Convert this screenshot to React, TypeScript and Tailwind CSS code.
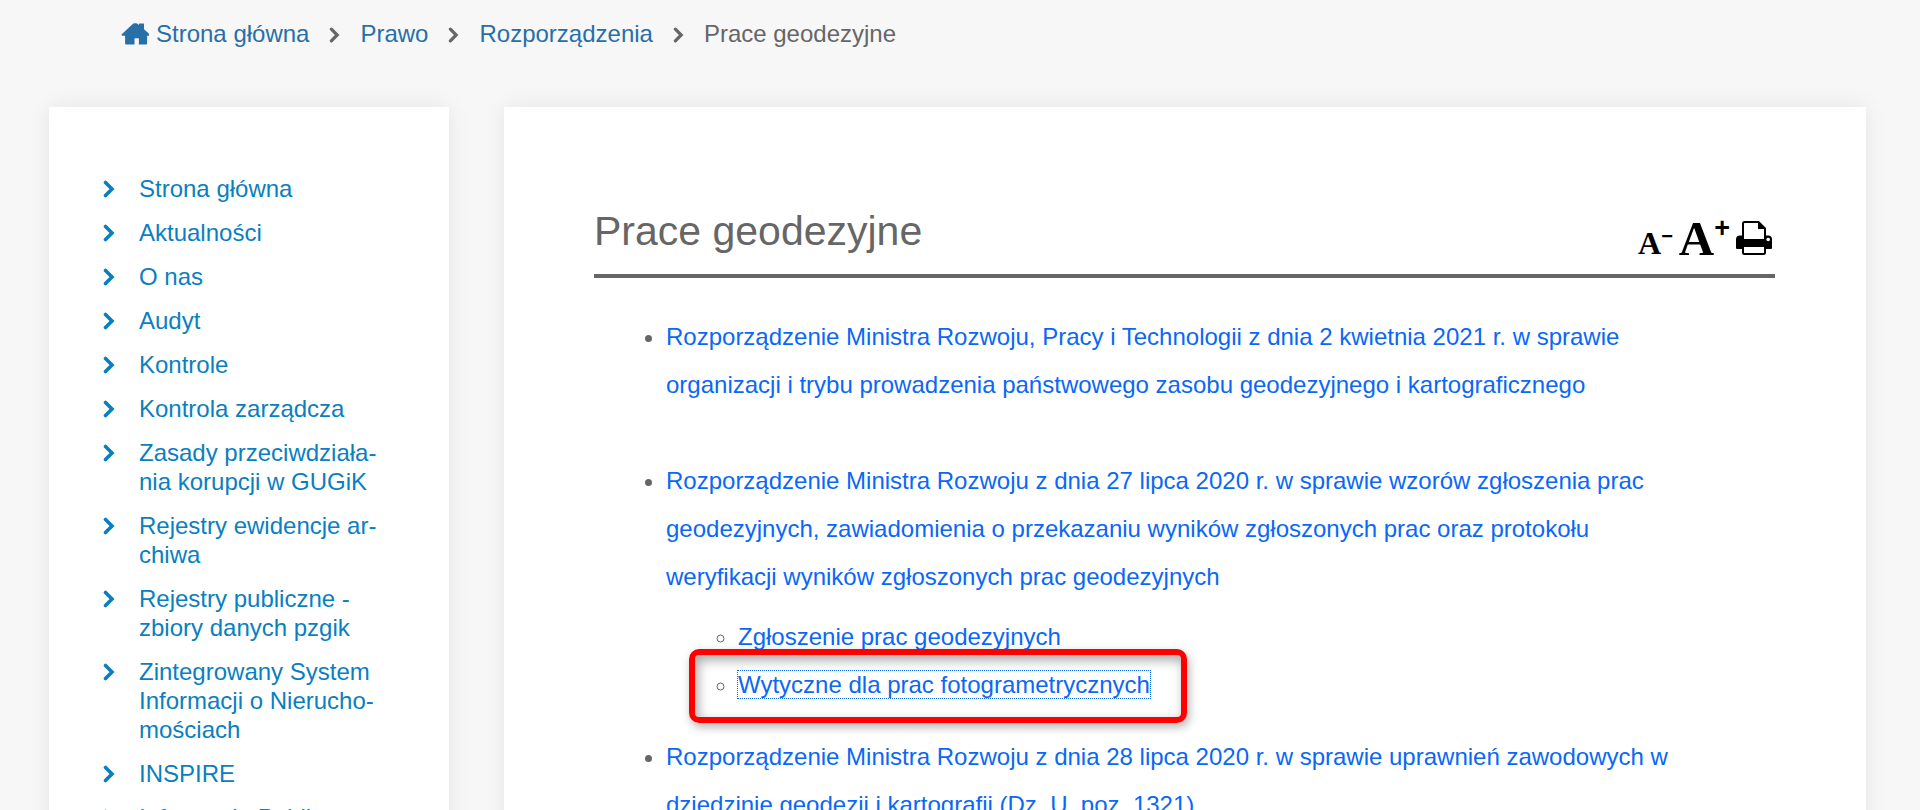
const breadcrumbs = ["Strona główna", "Prawo", "Rozporządzenia"];

const menu = [
  "Strona główna",
  "Aktualności",
  "O nas",
  "Audyt",
  "Kontrole",
  "Kontrola zarządcza",
  "Zasady przeciwdziała\u00adnia korupcji w GUGiK",
  "Rejestry ewidencje ar\u00adchiwa",
  "Rejestry publiczne - zbiory danych pzgik",
  "Zintegrowany System Informacji o Nierucho\u00admościach",
  "INSPIRE",
  "Informacja Publiczna",
];

function HomeIcon() {
  return (
    <svg viewBox="0 0 27 22" className="h-[22px] w-7" fill="currentColor" aria-hidden="true">
      <path d="M11.300.900Q12 .2 13 .2h1.600q.8 0 1.400.500l1.400 1.300V.9q0-.5.6-.5h3.900q.6 0 .6.600v5.300l5.300 4.700q.7.8.1 1.400-.4.400-1.300.400h-1v7.700q0 1-1 1h-7.200v-5.700q0-.6-.6-.6h-3.200q-.6 0-.6.600v5.700H4.600q-1 0-1-1v-7.700H1.500q-.9 0-1.200-.4-.5-.6.200-1.400z" />
    </svg>
  );
}

function Chevron({ className }: { className: string }) {
  return (
    <svg viewBox="0 0 12 18" className={className} fill="none" stroke="currentColor" aria-hidden="true">
      <path d="M2.500 2.500l6.500 6.500-6.500 6.500" strokeWidth="3.600" strokeLinecap="round" strokeLinejoin="miter" />
    </svg>
  );
}

function PrintIcon() {
  return (
    <svg viewBox="0 0 36 34" className="h-[34px] w-9" aria-hidden="true">
      <path d="M4 14.500h28a4 4 0 0 1 4 4V27q0 1-1 1H1q-1 0-1-1v-8.500a4 4 0 0 1 4-4z" fill="black" />
      <path d="M7 18V2.500Q7 1 8.500 1H22l7 7v10z" fill="white" />
      <path d="M7 18V2.500Q7 1 8.500 1H22.500L29 7.500V18" fill="none" stroke="black" strokeWidth="2" />
      <path d="M22 1v7h7.500z" fill="black" />
      <path d="M7 25h22v6.500q0 1.500-1.500 1.500h-19Q7 33 7 31.500z" fill="white" stroke="black" strokeWidth="2" />
      <circle cx="32.200" cy="18.500" r="1.800" fill="white" />
    </svg>
  );
}

export default function App() {
  return (
    <div className="h-screen overflow-hidden bg-[#f7f7f7] font-['Liberation_Sans',Arial,sans-serif] text-2xl text-[#666]">
      <nav aria-label="Okruszki" className="px-[121px] pt-5">
        <ol className="flex items-center">
          {breadcrumbs.map((name, i) => (
            <li key={name} className="flex items-center leading-7">
              <a href="#" className="flex items-center gap-[7px] text-[#286fa8]">
                {i === 0 && <HomeIcon />}
                {name}
              </a>
              <Chevron className="mx-5 mt-[2px] h-4 w-[11px]" />
            </li>
          ))}
          <li className="leading-7">Prace geodezyjne</li>
        </ol>
      </nav>

      <div className="mt-[59px] flex gap-[55px] pr-[54px] pl-[49px]">
        <aside className="w-[400px] shrink-0 bg-white pt-[67px] pr-[70px] pb-16 pl-[54px] shadow-[0_0_20px_rgba(0,0,0,0.08)]">
          <ul className="flex flex-col gap-[15px] leading-[29px] text-[#0a7fc0]">
            {menu.map((name) => (
              <li key={name}>
                <a href="#" className="flex items-start gap-6">
                  <Chevron className="mt-[6px] h-[18px] w-3 shrink-0" />
                  <span>{name}</span>
                </a>
              </li>
            ))}
          </ul>
        </aside>

        <main className="min-w-0 flex-1 bg-white pt-[100px] pr-[91px] pb-16 pl-[90px] shadow-[0_0_20px_rgba(0,0,0,0.08)]">
          <header className="flex items-end justify-between border-b-4 border-[#666] pb-[19px]">
            <h1 className="text-[41px] leading-[48px]">Prace geodezyjne</h1>
            <div className="flex items-end gap-[6px] pr-[3px] font-bold text-black">
              <button type="button" aria-label="Zmniejsz czcionkę" className="flex items-start">
                <span className="font-['Liberation_Serif',serif] text-[32px] leading-[24px]">A</span>
                <span className="text-[20px] leading-[10px]">−</span>
              </button>
              <button type="button" aria-label="Powiększ czcionkę" className="flex items-start">
                <span className="font-['Liberation_Serif',serif] text-[49px] leading-[32px]">A</span>
                <span className="text-[27px] leading-[10px]">+</span>
              </button>
              <button type="button" aria-label="Drukuj">
                <PrintIcon />
              </button>
            </div>
          </header>

          <ul className="mt-[35px] list-disc pr-20 pl-[72px] leading-[48px]">
            <li className="mb-12">
              <a href="#" className="text-[#0a68f5]">
                Rozporządzenie Ministra Rozwoju, Pracy i Technologii z dnia 2 kwietnia 2021 r. w sprawie
                organizacji i trybu prowadzenia państwowego zasobu geodezyjnego i kartograficznego
              </a>
            </li>
            <li className="mb-6">
              <a href="#" className="text-[#0a68f5]">
                Rozporządzenie Ministra Rozwoju z dnia 27 lipca 2020 r. w sprawie wzorów zgłoszenia prac
                geodezyjnych, zawiadomienia o przekazaniu wyników zgłoszonych prac oraz protokołu
                weryfikacji wyników zgłoszonych prac geodezyjnych
              </a>
              <ul className="mt-3 list-[circle] pl-[72px]">
                <li>
                  <a href="#" className="text-[#0a68f5]">Zgłoszenie prac geodezyjnych</a>
                </li>
                <li className="relative">
                  <a href="#" className="text-[#0a68f5] outline-1 outline-dotted outline-[#0a68f5]">
                    Wytyczne dla prac fotogrametrycznych
                  </a>
                  <div className="pointer-events-none absolute -top-3 -left-[49px] h-[74px] w-[498px] rounded-[10px] border-[6px] border-[#f00] shadow-[2px_4px_10px_rgba(0,0,0,0.3),inset_3px_5px_12px_rgba(0,0,0,0.35)]" />
                </li>
              </ul>
            </li>
            <li>
              <a href="#" className="text-[#0a68f5]">
                Rozporządzenie Ministra Rozwoju z dnia 28 lipca 2020 r. w sprawie uprawnień zawodowych w
                dziedzinie geodezji i kartografii (Dz. U. poz. 1321)
              </a>
            </li>
          </ul>
        </main>
      </div>
    </div>
  );
}
